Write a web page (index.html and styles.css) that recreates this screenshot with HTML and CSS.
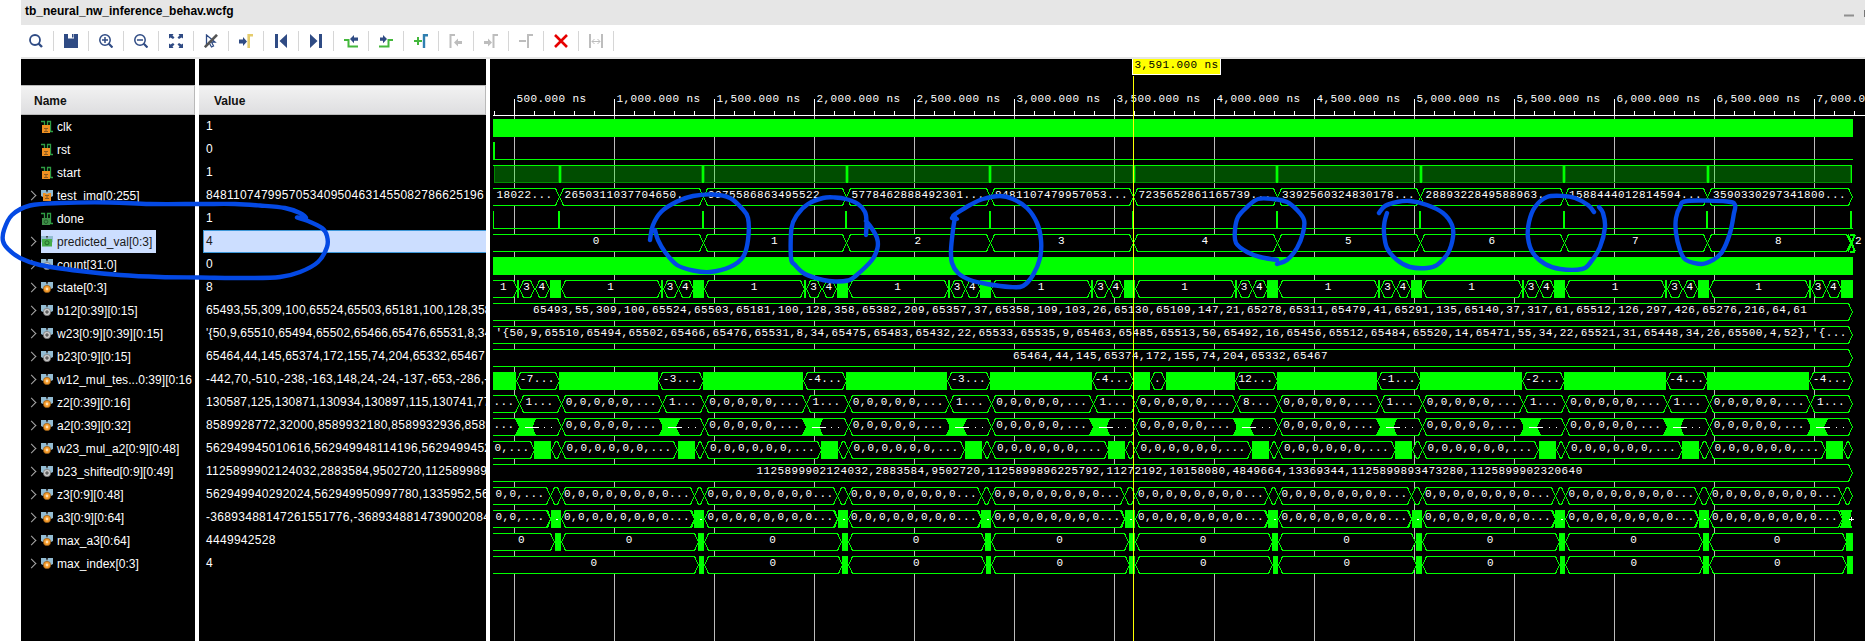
FILE: index.html
```html
<!DOCTYPE html>
<html lang="en">
<head>
<meta charset="utf-8">
<title>tb_neural_nw_inference_behav.wcfg</title>
<link rel="stylesheet" href="styles.css">
</head>
<body>
<svg class="defs" width="0" height="0">
  <symbol id="sig-in" viewBox="0 0 12 13"><path d="M0 1.5H3.5V8M6.5 8V1.5H9.5V11.5H12" fill="none" stroke="#2f9e44" stroke-width="1.3"/><path d="M1 5h8v8H1z" fill="#f09020"/><path d="M3 8.5h4M5 8.5v3M3 11.5h4" stroke="#8a5a20" fill="none"/></symbol>
  <symbol id="sig-out" viewBox="0 0 12 13"><path d="M0 1.5H3.5V8M6.5 8V1.5H9.5V11.5H12" fill="none" stroke="#2f9e44" stroke-width="1.3"/><path d="M1 6h8v7H1z" fill="#3f8f48"/><circle cx="5" cy="9.7" r="1.8" stroke="#205a28" fill="none"/></symbol>
  <symbol id="bus-base" viewBox="0 0 12 13"><path d="M0 1h5l1 2 1-2h5v6l-2 1H2L0 7z" fill="#93bcd3"/><path d="M5 1l1 3 1-3" fill="#333"/></symbol>
  <symbol id="bus-in" viewBox="0 0 12 13"><use href="#bus-base"/><path d="M2 4h2l2 1 2-1h2v8H2z" fill="#f09020"/><path d="M4 6.5h4M6 6.5v3M4 9.5h4" stroke="#8a5a20" fill="none"/></symbol>
  <symbol id="bus-out" viewBox="0 0 12 13"><use href="#bus-base"/><path d="M1 4h10v7.500H1z" fill="#46ad4b"/><circle cx="6" cy="7.800" r="2" stroke="#256b2c" fill="none"/></symbol>
  <symbol id="bus-var" viewBox="0 0 12 13"><use href="#bus-base"/><circle cx="6" cy="8" r="3.700" fill="#f39a2b" stroke="#7a4a10" stroke-width=".6"/><circle cx="6" cy="8" r="1.400" fill="#ffe0b0"/></symbol>
  <symbol id="bus-const" viewBox="0 0 12 13"><use href="#bus-base"/><circle cx="6" cy="8" r="3.700" fill="#c8c8c8" stroke="#666" stroke-width=".6"/><circle cx="6" cy="8" r="1.200" fill="#777" stroke="#555"/></symbol>
</svg>

<header class="titlebar"><span>tb_neural_nw_inference_behav.wcfg</span>
  <svg class="winbtns" width="21" height="12" viewBox="0 0 21 12"><path d="M0 7.500H10" stroke="#8f8f8f" stroke-width="2"/><path d="M20.500 2V9" stroke="#777"/></svg>
</header>

<nav class="toolbar">
  <span class="tool"><svg viewBox="0 0 14 14"><circle cx="6" cy="6" r="5" stroke="#2f4b84" stroke-width="1.800" fill="none"/><path d="M9.500 9.500L13 13" stroke="#2f4b84" stroke-width="2.400"/></svg></span>
  <span class="tool"><svg viewBox="0 0 14 14"><path d="M0 0H4V4.500H10V0H14V14H0zM8 0h1.500v3.500H8z" fill="#2f4b84"/></svg></span>
  <span class="tool"><svg viewBox="0 0 14 14"><circle cx="6" cy="6" r="5.200" stroke="#2f4b84" stroke-width="1.500" fill="none"/><path d="M9.800 9.800L13.500 13.500" stroke="#2f4b84" stroke-width="2.200"/><path d="M3 6h6M6 3v6" stroke="#2f4b84" stroke-width="1.500"/></svg></span>
  <span class="tool"><svg viewBox="0 0 14 14"><circle cx="6" cy="6" r="5.200" stroke="#2f4b84" stroke-width="1.500" fill="none"/><path d="M9.800 9.800L13.500 13.500" stroke="#2f4b84" stroke-width="2.200"/><path d="M3 6h6" stroke="#2f4b84" stroke-width="1.500"/></svg></span>
  <span class="tool"><svg viewBox="0 0 14 14"><path d="M0 0h4.500L3.500 1.500 5.500 3.500 4 5 1.500 3.500 0 4.500zM14 0v4.500l-1.500-1L10 5 8.500 3.500l2-2L9.500 0zM0 14V9.500l1.500 1L4 9l1.500 1.500-2 2 1 1.500zM14 14H9.500l1-1.500-2-2L10 9l2.500 1.500 1.500-1z" fill="#2f4b84"/></svg></span>
  <span class="tool"><svg viewBox="0 0 14 14"><path d="M2.500 1v10l2.500-2.500L7.500 13l2-1-2-4H11z" stroke="#2f4b84" fill="none" stroke-width="1.300"/><path d="M13 .8L.8 13.200" stroke="#555" stroke-width="2.600"/></svg></span>
  <span class="tool"><svg viewBox="0 0 14 14"><path d="M0 5.500h4V3l4 4.500L4 12V9.500H0z" fill="#2f4b84"/><path d="M14 1.200H9.700V14" stroke="#e5cc6c" stroke-width="2.600" fill="none"/></svg></span>
  <span class="tool"><svg viewBox="0 0 14 14"><path d="M1 0h3v14H1zM13 0v14L5.500 7z" fill="#2f4b84"/></svg></span>
  <span class="tool"><svg viewBox="0 0 14 14"><path d="M10 0h3v14h-3zM1 0v14l7.500-7z" fill="#2f4b84"/></svg></span>
  <span class="tool"><svg viewBox="0 0 14 14"><path d="M0 6H4.500V12.500H14" stroke="#44b83c" stroke-width="2" fill="none"/><path d="M6 5l4-4v2.500h4v3.300h-4v2.400z" fill="#2f4b84"/></svg></span>
  <span class="tool"><svg viewBox="0 0 14 14"><path d="M0 12.500H9.500V6H14" stroke="#44b83c" stroke-width="2" fill="none"/><path d="M8 5L4 1v2.500H1v3.300h3v2.400z" fill="#2f4b84"/></svg></span>
  <span class="tool"><svg viewBox="0 0 14 14"><path d="M0 7h8M4 3v8" stroke="#44b83c" stroke-width="2"/><path d="M14 1.200H10V14" stroke="#2f7fb0" stroke-width="2.400" fill="none"/></svg></span>
  <span class="tool"><svg viewBox="0 0 14 14"><path d="M6 1H1.500V14" stroke="#bdbdbd" stroke-width="2" fill="none"/><path d="M5 8.500l4-4V7h4v3H9v2.500z" fill="#bdbdbd"/></svg></span>
  <span class="tool"><svg viewBox="0 0 14 14"><path d="M0 7h4V4.500l4 4-4 4V10H0z" fill="#bdbdbd"/><path d="M14 1H9.500V14" stroke="#bdbdbd" stroke-width="2" fill="none"/></svg></span>
  <span class="tool"><svg viewBox="0 0 14 14"><path d="M0 7h7M14 1H9V14" stroke="#bdbdbd" stroke-width="2" fill="none"/></svg></span>
  <span class="tool"><svg viewBox="0 0 14 14"><path d="M1 1l12 12M13 1L1 13" stroke="#e60000" stroke-width="2.600"/></svg></span>
  <span class="tool"><svg viewBox="0 0 14 14"><path d="M1 0v14M13 0v14" stroke="#bdbdbd" stroke-width="2"/><path d="M3 7.500h8M5.500 5L3 7.500 5.500 10M8.500 5L11 7.500 8.500 10" stroke="#bdbdbd" fill="none"/></svg></span>
</nav>

<main class="panes">
  <section class="pane names">
    <h2>Name</h2>
    <ul>
      <li><i></i><svg><use href="#sig-in"/></svg><b>clk</b></li>
      <li><i></i><svg><use href="#sig-in"/></svg><b>rst</b></li>
      <li><i></i><svg><use href="#sig-in"/></svg><b>start</b></li>
      <li class="bus"><i></i><svg><use href="#bus-in"/></svg><b>test_img[0:255]</b></li>
      <li><i></i><svg><use href="#sig-out"/></svg><b>done</b></li>
      <li class="bus selected"><i></i><span><svg><use href="#bus-out"/></svg><b>predicted_val[0:3]</b></span></li>
      <li class="bus"><i></i><svg><use href="#bus-const"/></svg><b>count[31:0]</b></li>
      <li class="bus"><i></i><svg><use href="#bus-var"/></svg><b>state[0:3]</b></li>
      <li class="bus"><i></i><svg><use href="#bus-const"/></svg><b>b12[0:39][0:15]</b></li>
      <li class="bus"><i></i><svg><use href="#bus-const"/></svg><b>w23[0:9][0:39][0:15]</b></li>
      <li class="bus"><i></i><svg><use href="#bus-const"/></svg><b>b23[0:9][0:15]</b></li>
      <li class="bus"><i></i><svg><use href="#bus-var"/></svg><b>w12_mul_tes...0:39][0:16</b></li>
      <li class="bus"><i></i><svg><use href="#bus-var"/></svg><b>z2[0:39][0:16]</b></li>
      <li class="bus"><i></i><svg><use href="#bus-var"/></svg><b>a2[0:39][0:32]</b></li>
      <li class="bus"><i></i><svg><use href="#bus-var"/></svg><b>w23_mul_a2[0:9][0:48]</b></li>
      <li class="bus"><i></i><svg><use href="#bus-const"/></svg><b>b23_shifted[0:9][0:49]</b></li>
      <li class="bus"><i></i><svg><use href="#bus-var"/></svg><b>z3[0:9][0:48]</b></li>
      <li class="bus"><i></i><svg><use href="#bus-var"/></svg><b>a3[0:9][0:64]</b></li>
      <li class="bus"><i></i><svg><use href="#bus-var"/></svg><b>max_a3[0:64]</b></li>
      <li class="bus"><i></i><svg><use href="#bus-var"/></svg><b>max_index[0:3]</b></li>
    </ul>
  </section>
  <section class="pane values">
    <h2>Value</h2>
    <ul>
      <li>1</li><li>0</li><li>1</li>
      <li>8481107479957053409504631455082786625196</li>
      <li>1</li>
      <li class="selected">4</li>
      <li>0</li><li>8</li>
      <li class="mixed">65493,55,309,100,65524,65503,65181,100,128,358</li>
      <li class="mixed">'{50,9,65510,65494,65502,65466,65476,65531,8,34</li>
      <li class="mixed">65464,44,145,65374,172,155,74,204,65332,65467</li>
      <li class="mixed">-442,70,-510,-238,-163,148,24,-24,-137,-653,-286,-8</li>
      <li class="mixed">130587,125,130871,130934,130897,115,130741,77</li>
      <li>8589928772,32000,8589932180,8589932936,8589</li>
      <li>562949945010616,562949948114196,5629499452</li>
      <li>1125899902124032,2883584,9502720,112589989</li>
      <li>562949940292024,562949950997780,1335952,562</li>
      <li>-36893488147261551776,-3689348814739002084</li>
      <li>4449942528</li><li>4</li>
    </ul>
  </section>
  <section class="pane wave">
    <svg id="wave" width="1375" height="582" viewBox="490 59 1375 582"></svg>
  </section>
</main>
<svg id="ink" width="1865" height="641" viewBox="0 0 1865 641"></svg>
<script src="wave.js"></script>
</body>
</html>
```
FILE: styles.css
```css
* { box-sizing: border-box; }
body {
  margin: 0;
  width: 1865px;
  height: 641px;
  overflow: hidden;
  position: relative;
  background: #fff;
  font: 12px "Liberation Sans", Arial, sans-serif;
  color: #000;
}
.defs { display: none; }

.titlebar {
  margin-left: 21px;
  height: 25px;
  padding: 0 0 3px 4px;
  background: #e6e6e6;
  display: flex;
  align-items: center;
  justify-content: space-between;
  font-weight: bold;
}
.winbtns { margin-top: 6px; }

.toolbar {
  margin-left: 19px;
  height: 32px;
  display: flex;
  align-items: center;
}
.tool {
  width: 35px;
  height: 20px;
  border-right: 1px solid #d6d6d6;
  display: flex;
  align-items: center;
  justify-content: center;
}
.tool svg { width: 14px; height: 14px; }

.panes {
  margin-left: 21px;
  border-top: 2px solid #e6e6e6;
  height: 584px;
  display: flex;
  gap: 4px;
}
.pane { background: #000; color: #fff; overflow: hidden; }
.names { width: 174px; padding-top: 26px; }
.values { width: 287px; padding-top: 26px; }
.wave { width: 1375px; }
.pane h2 {
  margin: 0;
  height: 30px;
  padding: 1px 0 0 13px;
  font-size: 12px;
  line-height: 29px;
  color: #111;
  border: 1px solid #b9b9b9;
  border-left: 0;
  background: linear-gradient(#f2f2f2, #dedee0);
}
.values h2 { padding-left: 15px; }
.pane ul { margin: 0; padding: 0; list-style: none; }
.pane li { height: 23px; white-space: nowrap; }

.names li { display: flex; align-items: center; padding-left: 7px; letter-spacing: .04px; }
.names li svg { width: 12px; height: 13px; margin-right: 4px; flex: none; }
.names b { font-weight: normal; }
.names i { width: 13px; flex: none; display: flex; }
.names .bus i::before {
  content: "";
  width: 6px;
  height: 6px;
  border: solid #a8a8a8;
  border-width: 1.3px 1.3px 0 0;
  transform: rotate(45deg);
}
.names .selected span {
  display: flex;
  align-items: center;
  width: 115px;
  height: 23px;
  background: #ccdeff;
  color: #1a1a1a;
}
.values li {
  margin-left: 4px;
  padding-left: 3px;
  line-height: 23px;
  letter-spacing: .3px;
}
.values li.mixed { letter-spacing: .19px; }
.values .selected {
  padding-left: 2px;
  line-height: 21px;
  background: #ccdeff;
  color: #1a1a1a;
  border: 1px solid #3c97d8;
  border-right: 0;
}

#wave { display: block; shape-rendering: crispEdges; }
#wave text {
  font: 11px "Liberation Mono", "Courier New", monospace;
  letter-spacing: .4px;
  fill: #fff;
  white-space: pre;
}
#wave .flag { fill: #000; }
#wave .line { stroke: #0f0; fill: none; }
#wave .seg { stroke: #0f0; fill: #000; }
#wave .full { fill: #0f0; }

#ink { position: absolute; left: 0; top: 0; pointer-events: none; }
#ink path {
  fill: none;
  stroke: #0449e4;
  stroke-width: 4.4;
  stroke-linecap: round;
  stroke-linejoin: round;
}
```
FILE: wave.js
```js
const out = [];
const top_ = i => 119 + 23 * i;
const LEFT = 493, END = 1853, OFF = 480;
const P = k => 559.2 + 143.5 * k;
const r = Math.round;

const rect = (x, y, w, h, fill) => out.push(`<rect x="${x}" y="${y}" width="${w}" height="${h}" fill="${fill}"/>`);
const text = (x, y, s, anchor = 'start', cls = '') =>
  out.push(`<text x="${x}" y="${y}" text-anchor="${anchor}" class="${cls}">${s}</text>`);
const full = (row, a, b) => rect(r(a), top_(row), r(b) - r(a), 18, '#0f0');

// One bus value between two transitions; open on the left when it starts before the view
function seg(row, a, b, label, tx) {
  const t = top_(row) + .5, m = t + 8.5, e = t + 17;
  const x1 = r(a) + .5, x2 = r(b) + .5, s = Math.min(4, (x2 - x1) / 2);
  if (a < LEFT) {
    rect(LEFT, t - .5, x2 - s - LEFT, 18, '#000');
    out.push(`<path class="seg" d="M${LEFT} ${t}H${x2 - s}L${x2} ${m}L${x2 - s} ${e}H${LEFT}"/>`);
  } else {
    out.push(`<path class="seg" d="M${x1} ${m}L${x1 + s} ${t}H${x2 - s}L${x2} ${m}L${x2 - s} ${e}H${x1 + s}Z"/>`);
  }
  if (label) {
    if (tx) text(tx, top_(row) + 10, label);
    else text((Math.max(a, 490) + b) / 2, top_(row) + 10, label, 'middle');
  }
}

// Ruler and grid
for (let k = 0; k < 14; k++) {
  const x = 514 + 100 * k;
  rect(x, 99, 1, 17, '#fff');
  rect(x, 116, 1, 525, '#bcbcbc');
  const v = 500 * (k + 1);
  text(x + 2.5, 102, (v >= 1000 ? Math.floor(v / 1000) + ',' + String(v % 1000).padStart(3, '0') : v) + '.000 ns');
}
for (let x = 494; x < 1865; x += 20) rect(x, 111, 1, 4, '#fff');
rect(LEFT, 115, 1372, 1, '#fff');

// clk, rst, start
full(0, LEFT, END);
rect(LEFT, 142, 2, 17, '#0f0');
rect(LEFT, 159, END - LEFT, 1, '#0f0');
rect(494, 166, END - 495, 17, 'rgba(0,255,0,.3)');
rect(494, 182, END - 495, 1, '#008a00');
rect(494, 166, 1, 16, '#008a00');
rect(LEFT, 165, END - LEFT - 1, 1, '#0f0');
for (let k = 0; k < 9; k++) {
  const x = r(P(k) + .5);
  rect(x - 2, 166, 4, 17, '#008a00');
  rect(x - 1, 166, 2, 17, '#0f0');
}
rect(1850, 166, 1, 17, '#008a00');
rect(1851, 165, 1, 18, '#0f0');

// test_img
const imgs = ['2650311037704650', '9975586863495522', '5778462888492301', '8481107479957053', '7235652861165739',
  '3392560324830178', '2889322849588963', '1588444012814594', '3590330297341800'];
seg(3, OFF, P(0), '18022...');
imgs.forEach((v, k) => seg(3, P(k), k === 8 ? END - 1 : P(k + 1), v + '...'));

// done
rect(LEFT, 228, END - LEFT, 1, '#0f0');
rect(LEFT, 211, 1, 18, '#0f0');
for (let k = 0; k < 10; k++) rect(r(P(k) - .8), 211, 2, 18, '#0f0');

// predicted_val
seg(5, OFF, P(1), '0');
for (let k = 1; k < 9; k++) seg(5, P(k), P(k + 1) - (k === 8 ? 1 : 0), String(k));
out.push('<path class="line" stroke-width="2" d="M1848 234.500L1855 251.500M1848 251.500L1855 234.500M1850 234.500H1855M1850 251.500H1855"/>');
text(1855, 244, '2');

full(6, LEFT, END);

// state
seg(7, OFF, P(0) - 42, '1');
for (let k = 0; k < 10; k++) {
  const p = P(k);
  rect(r(p - 42), 280, 2, 18, '#0f0');
  seg(7, p - 40, p - 25, '3');
  seg(7, p - 24.5, p - 10, '4');
  full(7, p - 9.300, k === 9 ? END : p + 1.500);
  if (k < 9) seg(7, p + 1.500, P(k + 1) - 42, '1');
}

// Constant arrays
seg(8, OFF, END - 1, '65493,55,309,100,65524,65503,65181,100,128,358,65382,209,65357,37,65358,109,103,26,65130,65109,147,21,65278,65311,65479,41,65291,135,65140,37,317,61,65512,126,297,426,65276,216,64,61', 533);
seg(9, OFF, END - 1, "'{50,9,65510,65494,65502,65466,65476,65531,8,34,65475,65483,65432,22,65533,65535,9,65463,65485,65513,50,65492,16,65456,65512,65484,65520,14,65471,55,34,22,65521,31,65448,34,26,65500,4,52},'{...", 495.500);
seg(10, OFF, END - 1, '65464,44,145,65374,172,155,74,204,65332,65467', 1013);
seg(15, OFF, END - 1, '1125899902124032,2883584,9502720,1125899896225792,11272192,10158080,4849664,13369344,1125899893473280,1125899902320640', 756.500);

// w12_mul
const w12 = [['-7', 43.700], ['-3', 44.700], ['-4', 43], ['-3', 42.500], ['-4', 41.700], ['12', 42], ['-1', 43.700], ['-2', 42], ['-4', 41], ['-4', 42]];
let from = LEFT;
w12.forEach(([v, d], k) => {
  full(11, from, P(k) - d);
  seg(11, P(k) - d, k === 9 ? END - 1 : P(k), v + '...');
  from = P(k);
});
rect(1150, top_(11), 16, 18, '#000');
seg(11, 1150, 1165, '.');

// z2, a2
const zeros5 = '0,0,0,0,0,...';
seg(12, OFF, P(0) - 40.500, '');
text(504, 405, '...', 'middle');
seg(13, OFF, P(0) - 40, '');
text(504, 428, '...', 'middle');
for (let k = 0; k < 10; k++) {
  const p = P(k), e = k === 9 ? END - 1 : p + 1.300;
  seg(12, p - 40.500, e, (k === 5 ? '8' : '1') + '...');
  seg(13, p - 28, e, '');
  out.push(`<path class="full" d="M${p - 44} 418H${p - 23}L${p - 26.500} 427L${p - 23} 436H${p - 44}L${p - 40} 427Z"/>`);
  rect(r(p - 34.500), 427, 14, 1, '#fff');
  rect(r(p - 15), 427, 1, 1, '#fff');
  rect(r(p - 8), 427, 1, 1, '#fff');
  if (k < 9) {
    seg(12, p + 1.300, P(k + 1) - 40.500, zeros5);
    seg(13, p + 1.300, P(k + 1) - 40, '');
    text((p + P(k + 1) - 39.200) / 2, 428, zeros5, 'middle');
  }
}

// w23_mul_a2, z3, a3, max_a3, max_index
seg(14, OFF, P(0) - 25.300, '0,...');
seg(16, OFF, P(0) - 9, '0,0,...');
seg(17, OFF, P(0) - 9, '0,0,...');
seg(18, OFF, P(0) - 4.800, '');
text(521.500, 543, '0', 'middle');
seg(19, OFF, P(1) - 4.500, '0');
for (let k = 0; k < 10; k++) {
  const p = P(k), last = k === 9, e = last ? END - 1 : p + 1.300;
  full(14, p - 25, p - 8.200);
  seg(14, p - 8.200, e, '');
  seg(16, p - 9, e, '');
  if (last) {
    out.push('<path class="full" d="M1840 510H1852L1850 519L1852 528H1840L1843 519Z"/>');
    rect(1849, 519, 5, 1, '#fff');
    rect(1851, 517, 1, 4, '#fff');
  } else {
    out.push(`<path class="line" d="M${r(p - 12) + .5} 510L${r(p - 9) + .5} 519L${r(p - 12) + .5} 528"/>`);
    full(17, p - 8.500, p + 1.300);
    rect(r(p - 3), 519, 2, 1, '#fff');
  }
  full(18, p - 4.500, last ? END : p + 1.500);
  if (k) full(19, p - 4, last ? END : p + 1.500);
  if (!last) {
    const n = P(k + 1), z8 = '0,0,0,0,0,0,0,0...';
    seg(14, p + 1.300, n - 25.300, '0,0,0,0,0,0,...');
    seg(16, p + 1.300, n - 9, z8);
    seg(17, p + 1.300, n - 9, z8);
    seg(18, p + 1.500, n - 4.800, '0');
    if (k) seg(19, p + 1.500, n - 4.500, '0');
  }
}

// Time cursor
rect(1133, 76, 1, 565, '#ff0');
rect(1132, 59, 89, 16, '#fff');
rect(1133, 59, 87, 15, '#ff0');
text(1134.500, 68, '3,591.000 ns', 'start', 'flag');

document.getElementById('wave').innerHTML = out.join('');

// Freehand pen marks, smoothed through their points
const strokes = [
  [297.5,217.5,306,218,300,213,285,208,260,205.5,235,204,200,204,150,204,110,202.5,60,203,30,205.5,12,215,4,230,3,241,8,249,20,258,40,265,80,271,120,275,160,277,200,277.5,250,278,280,277,300,272,318,262,327,247,327,236,322,228,308,221,297,217.5],
  [650,240,653,225,661.5,211.5,677,201.5,693,196,713,194.5,730,198,741.5,208,748,218,748,240,743,257,730,267,710,272,693,270.5,677,265,665,252,658,240,655,230],
  [866,235,866.5,222,865,212,858,204,846,199,835,197.5,823,198,808,204,797,215,791.5,228,791,258,795,265,805,274,823,280,835,281.5,848,280.5,855,276.5,872,260,877.5,248,877,238,871.5,228,866,221],
  [952,218,957,219,953,216,957,213,970,205,983,199,1000,196,1013,199,1027,208,1037,223,1041,240,1040,258,1033,275,1023,286,1010,287,987,284,970,280,958,273,952,263,951,250,953,230,955,217],
  [1277,264,1287,260,1297,248,1303,233,1304,220,1297,210,1287,202,1273,199,1258,199,1247,207,1238,217,1235,230,1236,243,1247,252,1260,257,1277,260],
  [1379,213,1385,206,1397,202,1410,201,1427,205,1443,213,1452,225,1453,237,1448,253,1437,265,1427,268,1410,267,1397,260,1387,248,1384,233,1384.5,222,1387,213],
  [1594,212,1588,205,1575,198,1563,196,1547,197,1535,207,1529,222,1528,238,1533,253,1545,264,1560,269,1582,269,1590,263,1600,247,1605,227,1603,213,1599,207],
  [1734,213,1735,205,1727,201.5,1687,201,1680,207,1676,218,1676,233,1680,250,1686,260,1702,264,1713,260,1722,252,1730,233,1734,213]
];
document.getElementById('ink').innerHTML = strokes.map(s => {
  const n = s.length / 2, pt = i => { i = Math.max(0, Math.min(n - 1, i)); return [s[2 * i], s[2 * i + 1]]; };
  let d = `M${pt(0)}`;
  for (let i = 0; i < n - 1; i++) {
    const a = pt(i - 1), b = pt(i), c = pt(i + 1), e = pt(i + 2);
    d += `C${b[0] + (c[0] - a[0]) / 6} ${b[1] + (c[1] - a[1]) / 6} ${c[0] - (e[0] - b[0]) / 6} ${c[1] - (e[1] - b[1]) / 6} ${c[0]} ${c[1]}`;
  }
  return `<path d="${d}"/>`;
}).join('');
```
